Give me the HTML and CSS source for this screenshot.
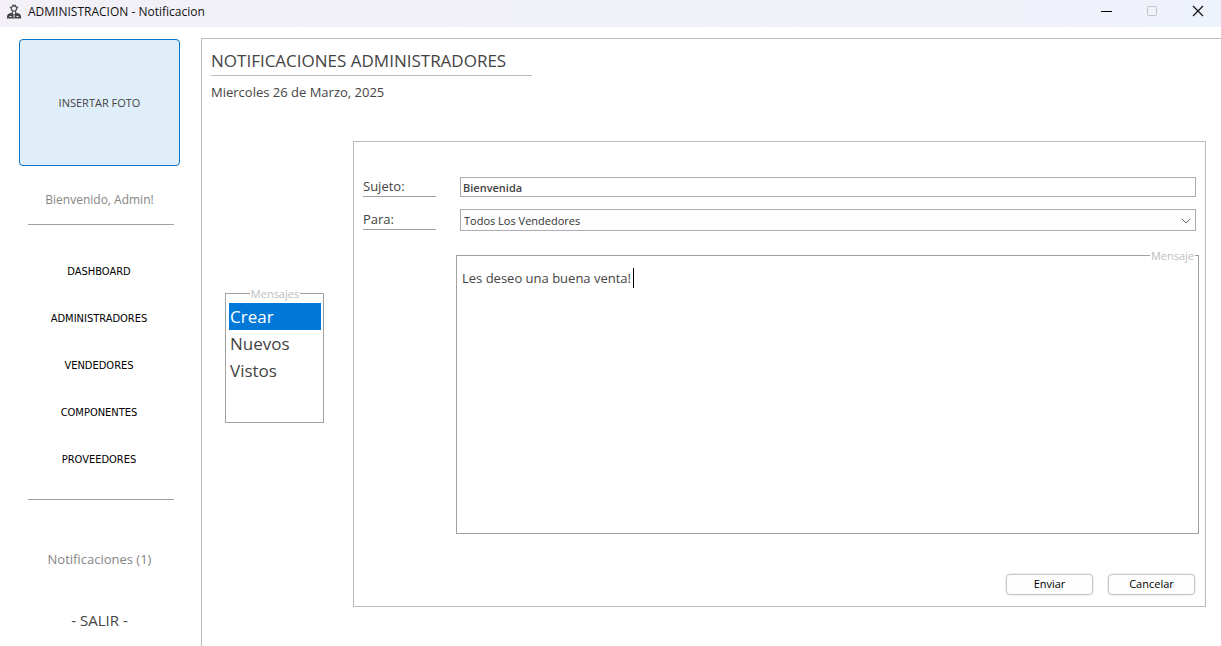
FILE: index.html
```html
<!DOCTYPE html>
<html lang="es">
<head>
<meta charset="utf-8">
<title>ADMINISTRACION - Notificacion</title>
<link rel="stylesheet" href="styles.css">
</head>
<body>
<div class="window">
  <header class="titlebar">
    <svg class="app-icon" width="16" height="16" viewBox="0 0 16 16" aria-hidden="true">
      <circle cx="8" cy="4.500" r="2.600" fill="#f3f0f7" stroke="#555" stroke-width="1.200"/>
      <path d="M3.800 3.500h1.700M10.500 3.500h1.700M6 1.500h4" stroke="#555" stroke-width="1.300"/>
      <path d="M6.500 7v2M9.500 7v2" stroke="#555"/>
      <path d="M1 14.500v-2.500l1-2L6 8.500l2 2 2-2L14 10l1 2v2.500z" fill="#444"/>
      <path d="M7.500 10.500h1v3h-1zM3.500 12h2v1h-2zM10.500 12h2v1h-2z" fill="#f3f0f7"/>
    </svg>
    <h1 class="window-title">ADMINISTRACION - Notificacion</h1>
    <div class="window-controls">
      <button class="control" type="button" aria-label="Minimizar"><svg width="12" height="12" viewBox="0 0 12 12"><path d="M1 6.500h11" stroke="#000"/></svg></button>
      <button class="control" type="button" aria-label="Maximizar" disabled><svg width="12" height="12" viewBox="0 0 12 12"><rect x="1.500" y="1.500" width="9" height="9" rx="1" fill="none" stroke="#c3c3c6"/></svg></button>
      <button class="control" type="button" aria-label="Cerrar"><svg width="12" height="12" viewBox="0 0 12 12"><path d="M1 1l10 10M11 1L1 11" stroke="#111" stroke-width="1.200"/></svg></button>
    </div>
  </header>
  <div class="workspace">
    <aside class="sidebar">
      <button class="photo" type="button">INSERTAR FOTO</button>
      <p class="welcome">Bienvenido, Admin!</p>
      <nav class="nav">
        <a class="nav-link" href="#dashboard">DASHBOARD</a>
        <a class="nav-link" href="#administradores">ADMINISTRADORES</a>
        <a class="nav-link" href="#vendedores">VENDEDORES</a>
        <a class="nav-link" href="#componentes">COMPONENTES</a>
        <a class="nav-link" href="#proveedores">PROVEEDORES</a>
      </nav>
      <a class="notifications" href="#notificaciones">Notificaciones (1)</a>
      <a class="exit" href="#salir">- SALIR -</a>
    </aside>
    <main class="main">
      <h2 class="heading">NOTIFICACIONES ADMINISTRADORES</h2>
      <p class="date">Miercoles 26 de Marzo, 2025</p>
      <div class="content">
        <fieldset class="group folders">
          <legend class="legend">Mensajes</legend>
          <button class="folder selected" type="button">Crear</button>
          <button class="folder" type="button">Nuevos</button>
          <button class="folder" type="button">Vistos</button>
        </fieldset>
        <form class="panel">
          <div class="row">
            <label class="label" for="subject">Sujeto:</label>
            <input class="field subject" id="subject" type="text" value="Bienvenida">
          </div>
          <div class="row">
            <label class="label label-tall" for="to">Para:</label>
            <div class="combo">
              <select class="field to" id="to"><option>Todos Los Vendedores</option></select>
              <svg class="chevron" width="10" height="6" viewBox="0 0 10 6" aria-hidden="true"><path d="M1 1l4 4 4-4" fill="none" stroke="#666"/></svg>
            </div>
          </div>
          <fieldset class="group message">
            <legend class="legend">Mensaje</legend>
            <textarea class="text" aria-label="Mensaje">Les deseo una buena venta!</textarea>
            <span class="caret"></span>
          </fieldset>
          <div class="actions">
            <button class="action" type="submit">Enviar</button>
            <button class="action" type="button">Cancelar</button>
          </div>
        </form>
      </div>
    </main>
  </div>
</div>
</body>
</html>
```
FILE: styles.css
```css
* { box-sizing: border-box; }
body {
  margin: 0;
  font-family: "Open Sans", "Noto Sans", sans-serif;
  font-size: 13px;
  color: #444;
  background: #fff;
}
h1, h2, p { margin: 0; font-weight: 400; }
button, input, select, textarea { font: inherit; color: inherit; margin: 0; }
a { text-decoration: none; color: inherit; }

.window { display: flex; flex-direction: column; height: 100vh; overflow: hidden; }
.titlebar {
  display: flex;
  flex: none;
  align-items: center;
  height: 27px;
  padding-left: 6px;
  background: linear-gradient(90deg, #f3f0f7, #eef2fa);
}
.app-icon { margin-bottom: 4px; }
.window-title { margin-left: 6px; padding-bottom: 3px; font-size: 12px; line-height: 16px; color: #111; }
.window-controls { display: flex; margin-left: auto; }
.control {
  display: flex;
  align-items: center;
  justify-content: center;
  width: 46px;
  height: 27px;
  padding: 0 0 5px;
  border: 0;
  background: none;
}

.workspace { display: grid; grid-template-columns: 201px 1fr; flex: 1; min-height: 0; }
.sidebar { display: flex; flex-direction: column; align-items: center; padding: 12px 2px 0 0; }
.photo {
  width: 161px;
  height: 127px;
  border: 1px solid #0a74c8;
  border-radius: 4px;
  background: #e0eef9;
  font-size: 11px;
}
.welcome { margin-top: 24px; font-size: 12px; line-height: 20px; color: #858585; }
.nav {
  display: flex;
  flex-direction: column;
  width: 146px;
  margin: 14px 0 0 3px;
  padding: 23px 4px 16px 0;
  border: solid #a0a0a0;
  border-width: 1px 0;
}
.nav-link { font-family: "DejaVu Sans Condensed", "Noto Sans", sans-serif; font-size: 11px; line-height: 47px; text-align: center; color: #000; }
.notifications { margin-top: 49px; font-size: 13px; line-height: 20px; color: #858585; }
.exit { margin-top: 41px; font-size: 15px; line-height: 20px; }

.main {
  display: flex;
  flex-direction: column;
  margin-top: 11px;
  padding-left: 9px;
  border: solid #bcbcbc;
  border-width: 1px 0 0 1px;
}
.heading { width: 321px; padding: 9px 0 1px; border-bottom: 1px solid #bcbcbc; font-size: 17px; line-height: 26px; white-space: nowrap; }
.date { margin-top: 6px; line-height: 20px; }
.content { display: grid; grid-template-columns: 99px 1fr; gap: 29px; align-items: start; padding: 39px 15px 0 14px; }

.group { min-width: 0; margin: 0; border: 1px solid #a0a0a0; }
.legend { padding: 1px 1px 0; font-size: 11px; line-height: 16px; color: #bdbdbd; }
.folders { height: 138px; margin-top: 144px; padding: 1px 2px 2px 3px; }
.folders .legend { margin: 0 auto; }
.folder {
  display: block;
  width: 100%;
  height: 27px;
  padding: 1px 1px 0;
  border: 0;
  background: #fff;
  font-size: 17px;
  line-height: 26px;
  text-align: left;
}
.folder.selected { background: #0078d7; color: #fff; }

.panel { padding: 35px 9px 10px; border: 1px solid #bcbcbc; }
.row { display: grid; grid-template-columns: 73px 1fr; gap: 24px; align-items: start; margin-bottom: 12px; }
.label { height: 20px; border-bottom: 1px solid #a0a0a0; line-height: 18px; }
.label-tall { height: 21px; line-height: 20px; }
.field {
  display: block;
  width: 100%;
  padding: 0 2px;
  border: 1px solid #abadb3;
  border-radius: 0;
  background: #fff;
  font-size: 11px;
  outline: none;
}
.subject { height: 20px; font-weight: 600; }
.combo { position: relative; }
.to { height: 22px; padding: 0 3px; appearance: none; background: #fdfdfd; font-weight: 500; color: #333; }
.chevron { position: absolute; right: 5px; top: 9px; pointer-events: none; }
.message { position: relative; height: 287px; margin: 16px -3px 0 93px; padding: 0; }
.message .legend { margin-left: auto; margin-right: 3px; }
.text {
  display: block;
  width: 100%;
  height: 260px;
  padding: 4px 5px;
  border: 0;
  background: none;
  line-height: 20px;
  resize: none;
  outline: none;
}
.caret { position: absolute; left: 176px; top: 4px; width: 1px; height: 20px; background: #000; }
.actions { display: flex; justify-content: flex-end; gap: 15px; margin: 40px 1px 1px 0; }
.action {
  width: 87px;
  height: 21px;
  padding: 0 0 2px;
  border: 1px solid #c8c8c8;
  border-radius: 4px;
  background: #fdfdfd;
  box-shadow: 0 0 0 1px #f0f0f0;
  font-size: 11px;
  color: #000;
}
```
